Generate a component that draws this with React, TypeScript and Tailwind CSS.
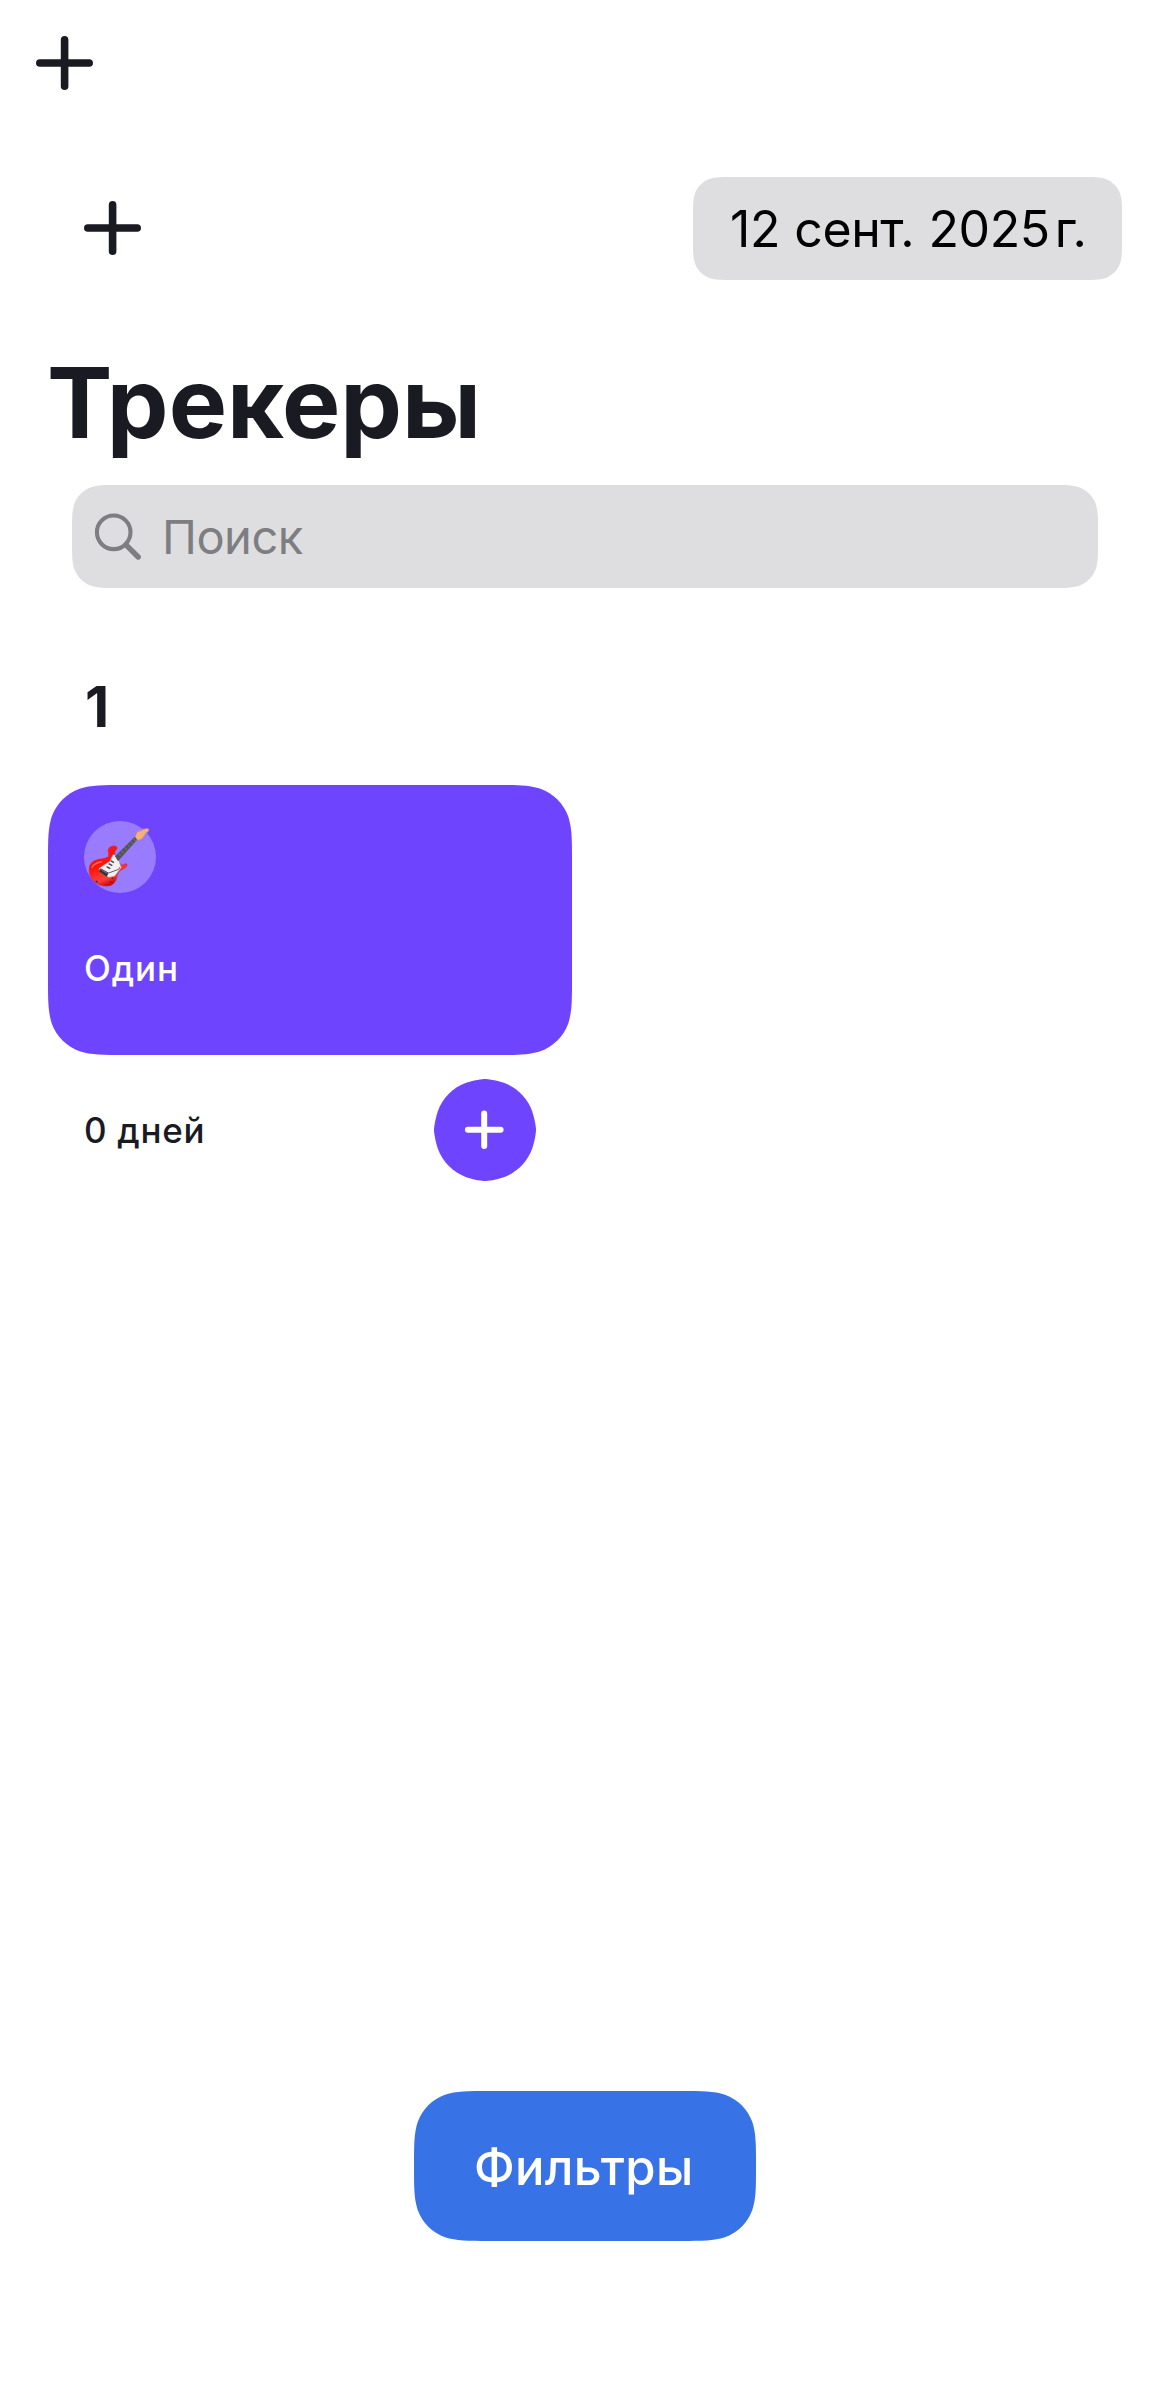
import type { CSSProperties, ReactNode } from "react";

// Continuous ("squircle") corner outline used by the rounded surfaces.
function continuousCorners(w: number, h: number, r: number): CSSProperties {
  const half = Math.min(w, h) / 2;
  const a = Math.min(1.528665 * r, half);
  const b = Math.min(1.088493 * r, half);
  const c = Math.min(0.868407 * r, half);
  const d = 0.631494 * r;
  const e = 0.074911 * r;
  const f = 0.372824 * r;
  const g = 0.16906 * r;
  const path = [
    `M${a} 0L${w - a} 0`,
    `C${w - b} 0 ${w - c} 0 ${w - d} ${e}`,
    `C${w - f} ${g} ${w - g} ${f} ${w - e} ${d}`,
    `C${w} ${c} ${w} ${b} ${w} ${a}`,
    `L${w} ${h - a}`,
    `C${w} ${h - b} ${w} ${h - c} ${w - e} ${h - d}`,
    `C${w - g} ${h - f} ${w - f} ${h - g} ${w - d} ${h - e}`,
    `C${w - c} ${h} ${w - b} ${h} ${w - a} ${h}`,
    `L${a} ${h}`,
    `C${b} ${h} ${c} ${h} ${d} ${h - e}`,
    `C${f} ${h - g} ${g} ${h - f} ${e} ${h - d}`,
    `C0 ${h - c} 0 ${h - b} 0 ${h - a}`,
    `L0 ${a}`,
    `C0 ${b} 0 ${c} ${e} ${d}`,
    `C${g} ${f} ${f} ${g} ${d} ${e}`,
    `C${c} 0 ${b} 0 ${a} 0Z`,
  ].join("");
  return { clipPath: `path("${path}")` };
}

function PlusIcon() {
  return (
    <svg width="57" height="54" viewBox="0 0 57 54" fill="none" stroke="#1A1B22" strokeWidth="7.6" strokeLinecap="round">
      <path d="M28.6 3.8V50.2M3.8 27H53.2" />
    </svg>
  );
}

function SearchIcon() {
  return (
    <svg width="48" height="48" viewBox="0 0 48 48" fill="none" stroke="#7E7E82" strokeLinecap="round">
      <circle cx="19.7" cy="19.3" r="16.8" strokeWidth="4.1" />
      <path d="M32 31.8L44.2 44" strokeWidth="5.4" />
    </svg>
  );
}

function GuitarIcon() {
  return (
    <svg width="72" height="72" viewBox="12 18 216 216">
      <defs>
        <linearGradient id="guitar-body" x1="0" y1="0" x2="0.4" y2="1">
          <stop offset="0" stopColor="#F51E1E" />
          <stop offset="0.5" stopColor="#FF1208" />
          <stop offset="0.85" stopColor="#FB4038" />
          <stop offset="1" stopColor="#D00D0D" />
        </linearGradient>
      </defs>
      <path
        d="M28 160C29 143 42 136 57 133C70 131 82 130 86 123C89 115 81 109 86 101C91 92 107 91 110 96C114 102 105 105 104 112C103 120 108 128 114 137C119 144 121 151 129 150C134 149 136 144 140 147C143 151 138 158 131 161C122 165 116 169 113 177C109 185 111 192 105 200C99 211 87 214 75 213C58 212 43 202 35 190C29 181 27 171 28 160Z"
        fill="url(#guitar-body)"
        stroke="#DB2131"
        strokeWidth="2"
      />
      <path d="M36 158C40 145 54 143 65 140" stroke="#FF6A62" strokeWidth="4" fill="none" strokeLinecap="round" />
      <path d="M99 119L105 120L117 139C118 147 123 152 124 157L104 183L87 187L62 173L58 160L77 147L90 139Z" fill="#F3F0F3" stroke="#BDB2BC" strokeWidth="1.5" />
      <path d="M105 124L166 64L173 73L114 139Z" fill="#55555C" />
      <path d="M115 115L122 123M124 106L132 115M134 97L141 105M143 88L150 96M152 79L159 87M160 71L167 79" stroke="#8E8D96" strokeWidth="1.6" />
      <path d="M165 66L171 51L184 47C190 42 202 38 206 42C209 48 202 51 197 55C193 61 191 68 184 73L173 76Z" fill="#F6B07A" stroke="#C9804E" strokeWidth="1.5" />
      <path d="M173 50L196 40M192 62L204 50" stroke="#B9A6BE" strokeWidth="2.5" strokeDasharray="3 3" />
      <path d="M92 137L102 143M86 146L97 152M80 155L91 161" stroke="#45424A" strokeWidth="4" />
      <path d="M62 160L86 173L80 185L57 170Z" fill="#37343A" />
      <path d="M64 164L82 175" stroke="#8E8990" strokeWidth="2.5" />
      <path d="M86 174L116 163L121 155" stroke="#46434B" strokeWidth="2.5" fill="none" />
      <circle cx="98" cy="190" r="3" fill="#8F1D22" />
      <circle cx="92" cy="200" r="3" fill="#8F1D22" />
      <circle cx="50" cy="200" r="3.5" fill="#6E2734" />
    </svg>
  );
}

function Surface({ w, h, r, className, children }: { w: number; h: number; r: number; className: string; children?: ReactNode }) {
  return (
    <div className={className} style={continuousCorners(w, h, r)}>
      {children}
    </div>
  );
}

function TrackerCard() {
  return (
    <article className="ml-12 w-[524px]">
      <Surface w={524} h={270} r={50} className="flex h-[270px] flex-col items-start bg-[#6E44FE] pt-9 pl-9">
        <div className="size-[72px] rounded-full bg-white/30">
          <GuitarIcon />
        </div>
        <p className="mt-[51px] text-[35px] leading-[48px] font-medium tracking-[0.9px] text-white">Один</p>
      </Surface>
      <div className="mt-6 flex h-[102px] items-center justify-between pr-9 pl-9">
        <p className="text-[35px] leading-[48px] font-medium tracking-[0.7px]">0 дней</p>
        <Surface w={102} h={102} r={51} className="flex size-[102px] items-center justify-center bg-[#6E44FE]">
          <svg width="102" height="102" viewBox="0 0 102 102" stroke="white" strokeWidth="6" strokeLinecap="round">
            <path d="M50.2 34.4V67M33.9 50.8H66.6" />
          </svg>
        </Surface>
      </div>
    </article>
  );
}

export default function App() {
  return (
    <main className="flex h-[2391px] w-[1170px] flex-col bg-white font-['Inter',sans-serif] text-[#1A1B22]">
      <nav className="flex h-[126px] items-center pl-9">
        <button aria-label="Добавить">
          <PlusIcon />
        </button>
      </nav>
      <header className="mt-[51px] flex h-[103px] items-start justify-between pr-12 pl-[84px]">
        <button aria-label="Добавить трекер" className="mt-6">
          <PlusIcon />
        </button>
        <Surface w={429} h={103} r={26} className="flex h-[103px] w-[429px] items-center bg-[#DEDEE0] pl-[37px] text-[50px] leading-[60px] whitespace-nowrap text-black">
          <span className="tracking-[-0.4px] [word-spacing:0.6px]">12 сент. 2025</span>
          <span className="ml-[5px] tracking-[-0.8px]">г.</span>
        </Surface>
      </header>
      <h1 className="mt-[63px] ml-[47px] text-[98px] leading-[120px] font-bold">Трекеры</h1>
      <Surface w={1026} h={103} r={30} className="mx-[72px] mt-[22px] flex h-[103px] items-center bg-[#DEDEE0] pl-[22px]">
        <SearchIcon />
        <span className="ml-5 text-[47px] leading-[60px] tracking-[-0.5px] text-[#7E7E82]">Поиск</span>
      </Surface>
      <h2 className="mt-[89px] ml-[85px] text-[56px] leading-[60px] font-bold">1</h2>
      <div className="mt-12">
        <TrackerCard />
      </div>
      <Surface w={342} h={150} r={49} className="mt-auto mb-[150px] flex h-[150px] w-[342px] items-center self-center bg-[#3772E7] pl-[60px]">
        <span className="mt-[3px] text-[49px] leading-[60px] font-medium tracking-[0.3px] text-white">Фильтры</span>
      </Surface>
    </main>
  );
}
